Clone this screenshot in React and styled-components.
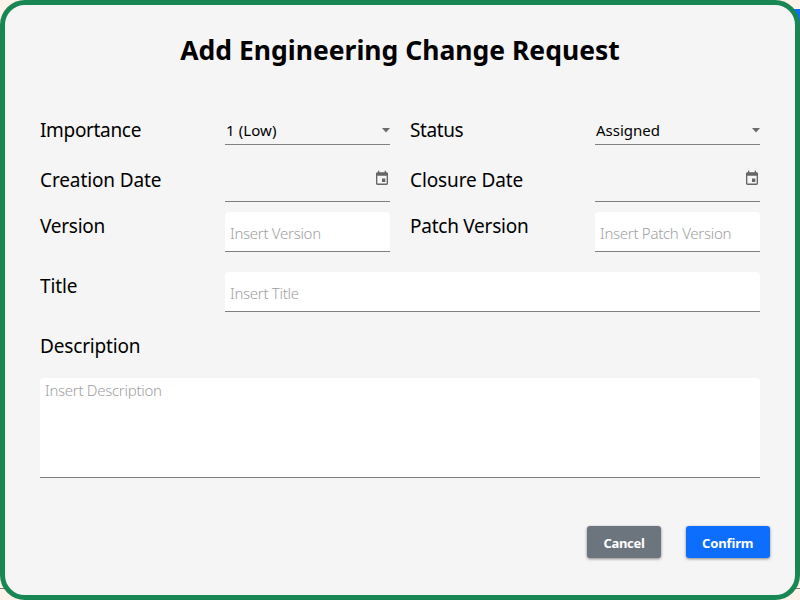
import React from 'react';
import styled, { createGlobalStyle } from 'styled-components';

const Global = createGlobalStyle`
  * { box-sizing: border-box; }
  body { margin: 0; background: #fff2ea; font-family: 'Noto Sans', 'Open Sans', sans-serif; color: #000; }
`;
const Page = styled.div`
  height: 600px; overflow: hidden;
  background:
    linear-gradient(#0d6efd, #0d6efd) 100% 9px / 60px 40px no-repeat,
    linear-gradient(#777, #777) 0 588px / 100% 1px no-repeat,
    #fff2ea;
`;
const Dialog = styled.form`
  height: 600px; border: 5px solid #198754; border-radius: 25px;
  background: #f5f5f5; padding: 25px 35px 0;
  display: flex; flex-direction: column;
`;
const Heading = styled.h1`
  margin: 0; height: 40px; line-height: 40px; text-align: center;
  font-size: 26.5px; font-weight: 700; white-space: nowrap;
`;
const Fields = styled.div`
  margin-top: 35px; display: grid;
  grid-template-columns: 185px 165px 20px 185px 165px;
  grid-template-rows: 50px 57px 60px 60px 46px;
`;
const Label = styled.label`
  grid-column: ${(p) => p.$col || 1}; height: 40px; padding-top: ${(p) => p.$top ?? 11}px;
  font-size: 19px; line-height: 28px; white-space: nowrap;
  letter-spacing: ${(p) => p.$track || 0}px;
`;
const Select = styled.div`
  height: 40px; border-bottom: 1px solid #808080; display: flex; align-items: center;
  justify-content: space-between; padding: 11px 0 0 1px; font-size: 15px;
  letter-spacing: ${(p) => p.$track || 0}px;
`;
const DateField = styled.div`
  height: 47px; border-bottom: 1px solid #808080; display: flex;
  justify-content: flex-end; padding: 15px 0 0;
`;
const Input = styled.input`
  grid-column: ${(p) => p.$span || 'auto'}; width: 100%; height: 40px;
  border: 0; border-bottom: 1px solid #808080; border-radius: 4px 4px 0 0; padding: 3px 5px 0;
  font: 300 15px 'Noto Sans', sans-serif; letter-spacing: -0.28px; background: #fff;
  &::placeholder { color: #a0a0a0; opacity: 1; }
`;
const Area = styled.textarea`
  width: 720px; height: 100px; resize: none; display: block;
  border: 0; border-bottom: 1px solid #808080; border-radius: 4px 4px 0 0; padding: 2px 5px;
  font: 300 15px 'Noto Sans', sans-serif; letter-spacing: -0.28px; background: #fff;
  &::placeholder { color: #a0a0a0; opacity: 1; }
`;
const Actions = styled.div`
  margin: 48px -9.5px 0 0; display: flex; justify-content: flex-end; gap: 25px;
`;
const Button = styled.button`
  width: ${(p) => p.$w}px; height: 32px; border: 0; border-radius: 3px; padding: 2px 0 0;
  color: #fff; background: ${(p) => p.$bg}; font: 700 13px 'Noto Sans', sans-serif;
  letter-spacing: ${(p) => p.$track}px;
  box-shadow: 0 1px 3px rgba(0,0,0,.45);
`;
const Arrow = () => <svg width="8" height="5" viewBox="0 0 8 5"><path d="M0 0h8L4 4.5z" fill="#6b6b6b" /></svg>;
const Calendar = () => (
  <svg width="16" height="17" viewBox="0 0 24 24" preserveAspectRatio="none"><path fill="#666" d="M19 3h-1V1h-2v2H8V1H6v2H5c-1.1 0-2 .9-2 2v14c0 1.1.9 2 2 2h14c1.1 0 2-.9 2-2V5c0-1.1-.9-2-2-2zm0 16H5V8h14v11zm-7-7h5v5h-5z" /></svg>
);

export default function App() {
  return (
    <Page><Global />
      <Dialog>
        <Heading>Add Engineering Change Request</Heading>
        <Fields>
          <Label $track={-0.33}>Importance</Label>
          <Select $track={0.1}>1 (Low)<Arrow /></Select>
          <Label $col={4} $track={-0.4}>Status</Label>
          <Select>Assigned<Arrow /></Select>
          <Label $track={-0.11}>Creation Date</Label>
          <DateField><Calendar /></DateField>
          <Label $col={4} $track={-0.12}>Closure Date</Label>
          <DateField><Calendar /></DateField>
          <Label $top={0} $track={-0.25}>Version</Label>
          <Input placeholder="Insert Version" />
          <Label $col={4} $top={0} $track={-0.25}>Patch Version</Label>
          <Input placeholder="Insert Patch Version" />
          <Label $top={0} $track={-0.1}>Title</Label>
          <Input $span="2 / 6" placeholder="Insert Title" />
          <Label $top={0} $track={-0.17}>Description</Label>
        </Fields>
        <Area placeholder="Insert Description" />
        <Actions>
          <Button type="button" $w={74} $track={-0.3} $bg="#6c757d">Cancel</Button>
          <Button type="button" $w={83.5} $track={-0.15} $bg="#0d6efd">Confirm</Button>
        </Actions>
      </Dialog>
    </Page>
  );
}
